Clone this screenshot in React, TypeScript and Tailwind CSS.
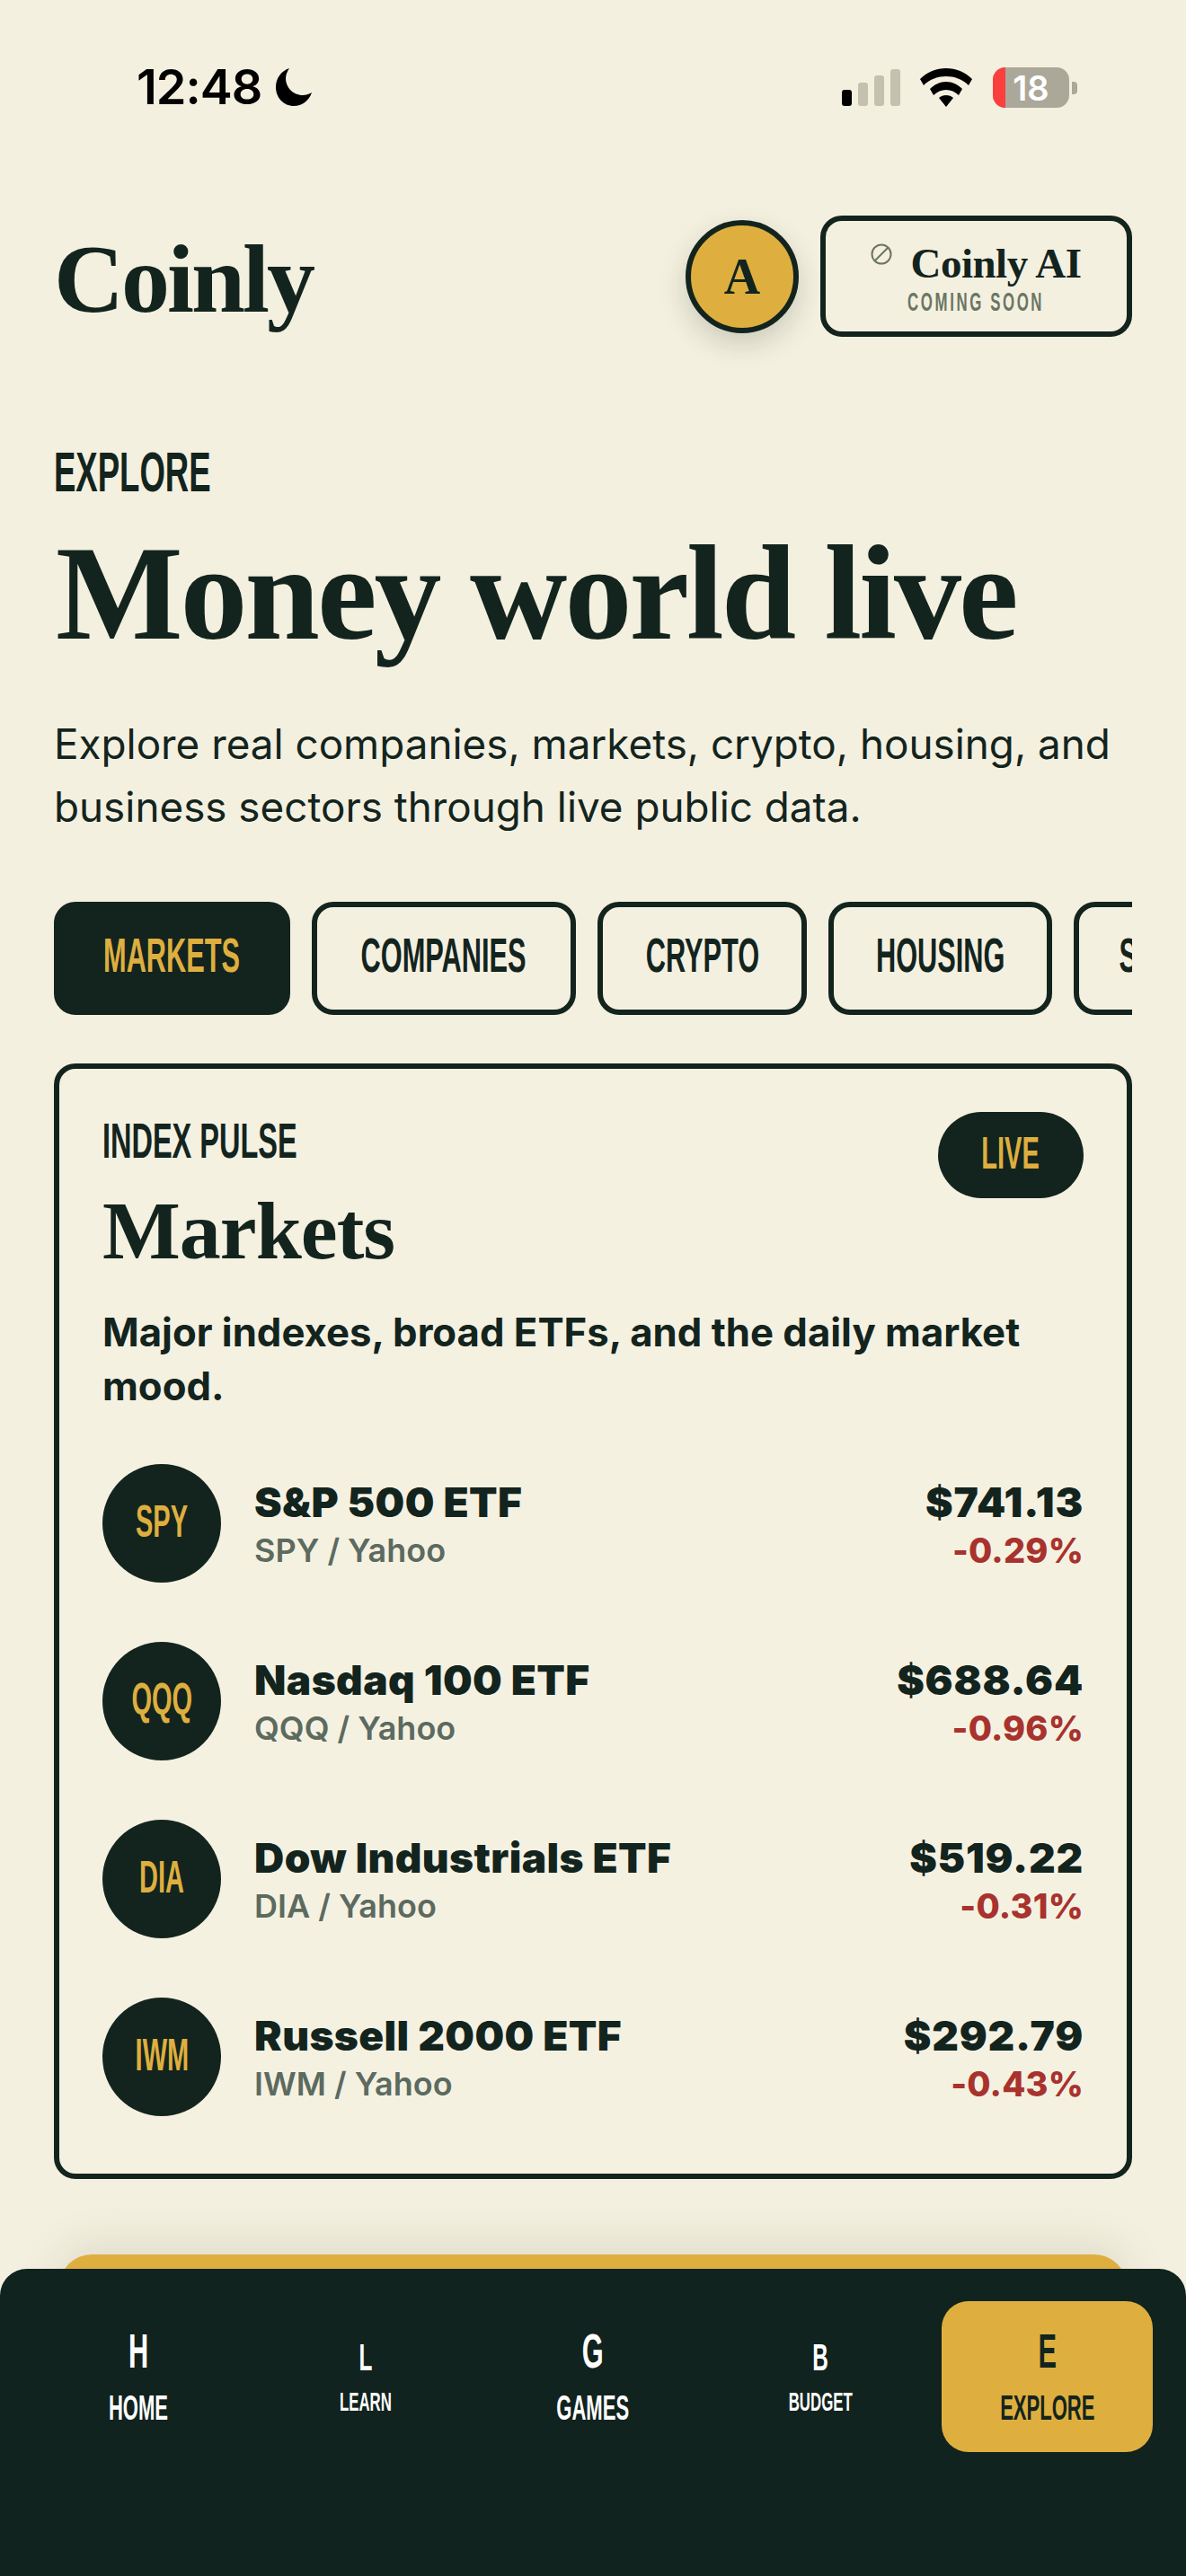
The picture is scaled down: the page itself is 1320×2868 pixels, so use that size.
const inter = "font-['Inter',sans-serif]";
const serif = "font-['Liberation_Serif',serif] font-bold";
const cond = "font-['Liberation_Sans',sans-serif] font-bold";

const tabs = [
  { label: "MARKETS", width: "w-[263px]", active: true },
  { label: "COMPANIES", width: "w-[294px]", active: false },
  { label: "CRYPTO", width: "w-[233px]", active: false },
  { label: "HOUSING", width: "w-[249px]", active: false },
  { label: "SECTORS", width: "w-[249px]", active: false },
];

const rows = [
  { ticker: "SPY", name: "S&P 500 ETF", price: "$741.13", change: "-0.29%" },
  { ticker: "QQQ", name: "Nasdaq 100 ETF", price: "$688.64", change: "-0.96%" },
  { ticker: "DIA", name: "Dow Industrials ETF", price: "$519.22", change: "-0.31%" },
  { ticker: "IWM", name: "Russell 2000 ETF", price: "$292.79", change: "-0.43%" },
];

const navItems = [
  { letter: "H", label: "HOME", big: true, active: false },
  { letter: "L", label: "LEARN", big: false, active: false },
  { letter: "G", label: "GAMES", big: true, active: false },
  { letter: "B", label: "BUDGET", big: false, active: false },
  { letter: "E", label: "EXPLORE", big: true, active: true },
];

function Narrow({ children, left }: { children: React.ReactNode; left?: boolean }) {
  return (
    <span className={`inline-block whitespace-nowrap scale-x-[0.58] ${left ? "origin-left" : "origin-center"}`}>
      {children}
    </span>
  );
}

function StatusBar() {
  return (
    <div className="flex h-[120px] items-end justify-between pl-[152px] pr-[121px]">
      <div className="flex items-center gap-[13px]">
        <span className={`${inter} text-[54px] font-semibold tracking-[-1px] leading-[46px] text-black`}>12:48</span>
        <svg viewBox="0 0 44 44" className="h-[44px] w-[46px]">
          <path d="M17 1C8 4 2 12 2 22c0 12 9 21 20 21 9 0 17-6 20-15-3 2-7 3-10 3-11 0-19-9-19-19 0-4 2-8 4-11z" fill="#000" />
        </svg>
      </div>
      <div className="flex items-center">
        <div className="flex items-end gap-[7px]">
          <div className="h-[18px] w-[11px] rounded-[3px] bg-black" />
          <div className="h-[26px] w-[11px] rounded-[3px] bg-[#c4c1ae]" />
          <div className="h-[34px] w-[11px] rounded-[3px] bg-[#c4c1ae]" />
          <div className="h-[41px] w-[11px] rounded-[3px] bg-[#c4c1ae]" />
        </div>
        <svg viewBox="0 0 58 43" className="ml-[22px] h-[43px] w-[58px]">
          <path d="M29 0c11 0 21 4 29 12l-4 7C47 12 38 9 29 9S11 12 4 19l-4-7C8 4 18 0 29 0z" fill="#000" />
          <path d="M29 15c7 0 13 3 18 8l-4 7c-4-4-9-6-14-6s-10 2-14 6l-4-7c5-5 11-8 18-8z" fill="#000" />
          <path d="M29 30c3 0 6 1 8 3l-8 10-8-10c2-2 5-3 8-3z" fill="#000" />
        </svg>
        <div className="relative ml-[23px] flex h-[45px] w-[85px] items-center justify-center overflow-hidden rounded-[14px] bg-[#aba899]">
          <div className="absolute inset-y-0 left-0 w-[14px] bg-[#fb3f3f]" />
          <span className={`${inter} relative text-[38px] font-semibold leading-none text-white`}>18</span>
        </div>
        <div className="ml-[3px] h-[14px] w-[6px] rounded-r-[4px] bg-[#aba899]" />
      </div>
    </div>
  );
}

function Header() {
  return (
    <div className="mt-[120px] flex h-[135px] items-center justify-between">
      <div className={`${serif} pt-[6px] text-[108px] leading-none tracking-[-3px] text-[#13241e]`}>Coinly</div>
      <div className="flex items-center gap-[24px]">
        <div className="flex h-[126px] w-[126px] items-center justify-center rounded-full border-[6px] border-[#13241e] bg-[#deaf3f] shadow-[0_12px_30px_rgba(19,36,30,0.18)]">
          <span className={`${serif} text-[56px] leading-none text-[#13241e]`}>A</span>
        </div>
        <div className="flex h-[135px] w-[347px] flex-col items-center rounded-[24px] border-[6px] border-[#13241e] pt-[20px]">
          <div className="flex items-start gap-[20px]">
            <svg viewBox="0 0 24 24" className="mt-[5px] h-[24px] w-[24px]" fill="none" stroke="#6b7565" strokeWidth="2">
              <circle cx="12" cy="12" r="10.5" />
              <path d="M5 19L19 5" />
            </svg>
            <span className={`${serif} text-[47px] leading-[54px] tracking-[-0.5px] text-[#13241e]`}>Coinly AI</span>
          </div>
          <div className={`${cond} flex justify-center text-[29px] leading-[32px] tracking-[4.5px] text-[#6b7565]`}>
            <Narrow>COMING SOON</Narrow>
          </div>
        </div>
      </div>
    </div>
  );
}

function Tabs() {
  return (
    <div className="mt-[70px] flex gap-[24px] overflow-hidden">
      {tabs.map((tab) => (
        <div
          key={tab.label}
          className={`${cond} flex h-[126px] shrink-0 items-center justify-center rounded-[24px] border-[6px] border-[#13241e] pb-[6px] text-[53px] ${tab.width} ${
            tab.active ? "bg-[#13241e] text-[#deaf3f]" : "text-[#13241e]"
          }`}
        >
          <Narrow>{tab.label}</Narrow>
        </div>
      ))}
    </div>
  );
}

function MarketRow({ ticker, name, price, change }: (typeof rows)[number]) {
  return (
    <div className="flex h-[132px] items-center">
      <div className={`${cond} flex h-[132px] w-[132px] shrink-0 items-center justify-center rounded-full bg-[#13241e] pb-[4px] text-[50px] text-[#deaf3f]`}>
        <Narrow>{ticker}</Narrow>
      </div>
      <div className={`${inter} ml-[37px] flex-1 pt-[5px]`}>
        <div className="text-[46px] font-black leading-[54px] tracking-[0.4px] text-[#13241e]">{name}</div>
        <div className="text-[36px] font-semibold leading-[54px] text-[#5c6a60]">{ticker} / Yahoo</div>
      </div>
      <div className={`${inter} pt-[5px] text-right`}>
        <div className="text-[46px] font-black leading-[54px] tracking-[0.8px] text-[#13241e]">{price}</div>
        <div className="text-[38px] font-extrabold leading-[54px] tracking-[0.2px] text-[#a8322d]">{change}</div>
      </div>
    </div>
  );
}

function MarketCard() {
  return (
    <div className="mt-[54px] h-[1242px] rounded-[24px] border-[6px] border-[#13241e] bg-[#f5f1e1] px-[48px] pt-[48px]">
      <div className="flex items-start justify-between">
        <div>
          <div className={`${cond} mt-[2px] text-[56px] leading-[60px] text-[#13241e]`}>
            <Narrow left>INDEX PULSE</Narrow>
          </div>
          <div className={`${serif} mt-[20px] text-[92px] leading-[100px] tracking-[-1px] text-[#13241e]`}>Markets</div>
        </div>
        <div className={`${cond} flex h-[96px] w-[162px] items-center justify-center rounded-full bg-[#13241e] pb-[4px] text-[50px] text-[#deaf3f]`}>
          <Narrow>LIVE</Narrow>
        </div>
      </div>
      <p className={`${inter} mt-[34px] text-[43.7px] font-bold leading-[60px] text-[#13241e]`}>
        Major indexes, broad ETFs, and the daily market mood.
      </p>
      <div className="mt-[56px] flex flex-col gap-[66px]">
        {rows.map((row) => (
          <MarketRow key={row.ticker} {...row} />
        ))}
      </div>
    </div>
  );
}

function BottomNav() {
  return (
    <div className="absolute inset-x-0 bottom-0 flex h-[342px] items-start gap-[18px] rounded-t-[30px] bg-[#11231e] px-[37px] pt-[36px]">
      {navItems.map((item) => (
        <div
          key={item.label}
          className={`${cond} flex h-[168px] w-[235px] flex-col items-center rounded-[30px] ${
            item.active ? "bg-[#deaf3f] text-[#13241e]" : "text-white"
          }`}
        >
          <div className={item.big ? "mt-[28px] h-[56px] text-[53px] leading-[56px]" : "mt-[38px] h-[50px] text-[42px] leading-[50px]"}>
            <Narrow>{item.letter}</Narrow>
          </div>
          <div className={item.big ? "mt-[13px] text-[38px] leading-[44px]" : "mt-[7px] text-[29px] leading-[34px]"}>
            <Narrow>{item.label}</Narrow>
          </div>
        </div>
      ))}
    </div>
  );
}

export default function App() {
  return (
    <div className="relative h-[2868px] w-[1320px] overflow-hidden bg-[#f4f0df]">
      <StatusBar />
      <div className="px-[60px]">
        <Header />
        <div className={`${cond} mt-[120px] text-[63px] leading-[60px] text-[#13241e]`}>
          <Narrow left>EXPLORE</Narrow>
        </div>
        <h1 className={`${serif} ml-[2px] mt-[35px] whitespace-nowrap text-[150px] leading-[140px] tracking-[-3px] text-[#13241e]`}>
          Money world live
        </h1>
        <p className={`${inter} mt-[64px] text-[45.8px] leading-[70px] text-[#13241e]`}>
          Explore real companies, markets, crypto, housing, and business sectors through live public data.
        </p>
        <Tabs />
        <MarketCard />
        <div className="mx-[6px] mt-[84px] h-[200px] rounded-[36px] bg-[#deaf3f] shadow-[0_-10px_50px_rgba(19,36,30,0.1)]" />
      </div>
      <BottomNav />
    </div>
  );
}
